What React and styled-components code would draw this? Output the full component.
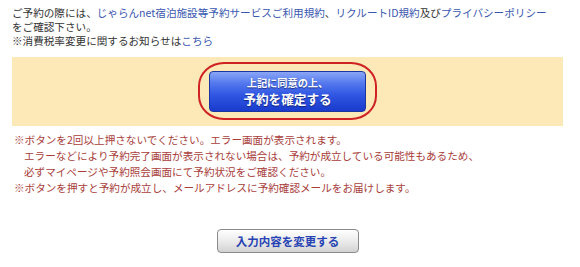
import React from 'react'
import styled, { createGlobalStyle } from 'styled-components'

const GlobalStyle = createGlobalStyle`
  body {
    margin: 0;
    background: #fff;
    font-family: "Noto Sans CJK JP", "Noto Sans", sans-serif;
  }
`

const notes = [
  { text: '※ボタンを2回以上押さないでください。エラー画面が表示されます。' },
  { text: 'エラーなどにより予約完了画面が表示されない場合は、予約が成立している可能性もあるため、', indent: true },
  { text: '必ずマイページや予約照会画面にて予約状況をご確認ください。', indent: true },
  { text: '※ボタンを押すと予約が成立し、メールアドレスに予約確認メールをお届けします。' },
]

export default function App() {
  return (
    <>
      <GlobalStyle />
      <Page>
        <Intro>
          ご予約の際には、<Link>じゃらんnet宿泊施設等予約サービスご利用規約</Link>、
          <Link>リクルートID規約</Link>及び<Link>プライバシーポリシー</Link>
          <br />
          をご確認下さい。
          <br />
          ※消費税率変更に関するお知らせは<Link>こちら</Link>
        </Intro>

        <ConfirmBand>
          <Ring>
            <ConfirmButton>
              <small>上記に同意の上、</small>
              <span>予約を確定する</span>
            </ConfirmButton>
          </Ring>
        </ConfirmBand>

        <Notes>
          {notes.map((n) => (
            <Note key={n.text} indent={n.indent ? 1 : 0}>{n.text}</Note>
          ))}
        </Notes>

        <BackRow>
          <BackButton>入力内容を変更する</BackButton>
        </BackRow>
      </Page>
    </>
  )
}

const Page = styled.div`
  width: 580px;
  padding: 6px 17px 0 12px;
  box-sizing: border-box;
`

const Intro = styled.p`
  margin: 0;
  font-size: 10.6px;
  line-height: 14px;
  color: #333;
  white-space: nowrap;
`

const Link = styled.a`
  color: #3a57b0;
  text-decoration: none;
  cursor: pointer;
`

const ConfirmBand = styled.div`
  margin-top: 9px;
  height: 69px;
  background: #fde9b7;
  display: flex;
  justify-content: center;
  align-items: flex-start;
  padding-top: 5px;
  box-sizing: border-box;
`

const Ring = styled.div`
  width: 179px;
  height: 58px;
  box-sizing: border-box;
  border: 2px solid #cf2222;
  border-radius: 26px / 24px;
  display: flex;
  justify-content: center;
  align-items: center;
`

const ConfirmButton = styled.button`
  width: 157px;
  height: 41px;
  padding: 0;
  border: 1px solid #1c36a0;
  border-radius: 4px;
  background: linear-gradient(#8aa6f6 0%, #5277ee 30%, #2f55e2 60%, #1a3bcc 100%);
  color: #fff;
  font-family: inherit;
  font-weight: bold;
  display: flex;
  flex-direction: column;
  align-items: center;
  justify-content: center;
  text-shadow: 0 1px 1px rgba(0, 0, 40, 0.5);
  cursor: pointer;

  small {
    font-size: 10.2px;
    line-height: 14px;
  }
  span {
    font-size: 12.6px;
    line-height: 17px;
  }
`

const Notes = styled.div`
  margin-top: 6px;
  color: #a83d3a;
  font-size: 10.6px;
  line-height: 16px;
`

const Note = styled.div`
  padding-left: ${(p) => (p.indent ? '12px' : '2px')};
  white-space: nowrap;
`

const BackRow = styled.div`
  margin-top: 33px;
  display: flex;
  justify-content: center;
`

const BackButton = styled.button`
  width: 142px;
  height: 24px;
  padding: 0;
  border: 1px solid #8a8a8a;
  border-radius: 4px;
  background: linear-gradient(#ffffff, #e9e9e9 55%, #d2d2d2);
  color: #2743b3;
  font-family: inherit;
  font-size: 11.5px;
  font-weight: bold;
  cursor: pointer;
`
